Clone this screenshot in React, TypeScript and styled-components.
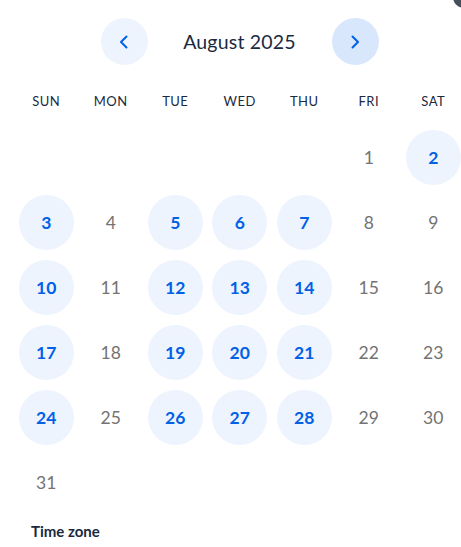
import * as React from 'react';
import styled, {createGlobalStyle} from 'styled-components';

const GlobalStyle = createGlobalStyle`
	html, body {
		margin: 0;
		padding: 0;
		background: #fff;
	}
	body {
		font-family: "Lato", "Open Sans", sans-serif;
		overflow: hidden;
	}
`;

const Page = styled.div`
	position: relative;
	width: 461px;
	height: 547px;
	overflow: hidden;
	background: #fff;
`;

const Corner = styled.div`
	position: absolute;
	top: -14px;
	right: -14px;
	width: 22px;
	height: 22px;
	border-radius: 50%;
	background: #45505c;
`;

const Calendar = styled.div`
	width: 465px;
	padding-left: 14px;
`;

const Header = styled.div`
	display: flex;
	align-items: center;
	justify-content: center;
	width: 451px;
	padding-top: 18px;
	height: 47px;
`;

const NavButton = styled.button<{strong?: boolean}>`
	width: 47px;
	height: 47px;
	border: 0;
	border-radius: 50%;
	padding: 0;
	display: flex;
	align-items: center;
	justify-content: center;
	background: ${p => p.strong ? '#d9e7fd' : '#eef4fe'};
	color: #0060e6;
	cursor: pointer;
`;

const Title = styled.div`
	width: 184px;
	text-align: center;
	font-size: 19.5px;
	color: #1a2a3f;
	letter-spacing: 0.2px;
`;

const Weekdays = styled.div`
	display: grid;
	grid-template-columns: repeat(7, 64.5px);
	margin-top: 24px;
	height: 24px;
	align-items: center;
`;

const Weekday = styled.div`
	text-align: center;
	font-size: 13px;
	color: #1a2a3f;
	letter-spacing: 0.5px;
`;

const Days = styled.div`
	display: grid;
	grid-template-columns: repeat(7, 64.5px);
	grid-auto-rows: 65px;
	margin-top: 12px;
`;

const Cell = styled.div`
	display: flex;
	align-items: center;
	justify-content: center;
`;

const Day = styled.div<{available?: boolean}>`
	width: 55px;
	height: 55px;
	border-radius: 50%;
	display: flex;
	align-items: center;
	justify-content: center;
	font-size: 17.5px;
	font-weight: ${p => p.available ? 700 : 400};
	color: ${p => p.available ? '#0060e6' : '#737373'};
	background: ${p => p.available ? '#eef4fe' : 'transparent'};
`;

const TimeZone = styled.div`
	padding-left: 31px;
	margin-top: 7px;
	font-size: 15px;
	font-weight: 700;
	color: #1a2a3f;
`;

const Chevron = ({dir}: {dir: 'left' | 'right'}) =>
	<svg width="14" height="16" viewBox="0 0 14 16" fill="none">
		<path
			d={dir === 'left' ? 'M9.5 2.5 4 8l5.5 5.5' : 'M4.5 2.5 10 8l-5.5 5.5'}
			stroke="currentColor"
			strokeWidth="2"
			strokeLinecap="round"
			strokeLinejoin="round"
		/>
	</svg>;

const weekdays = ['SUN', 'MON', 'TUE', 'WED', 'THU', 'FRI', 'SAT'];
const available = [2, 3, 5, 6, 7, 10, 12, 13, 14, 17, 19, 20, 21, 24, 26, 27, 28];
const offset = 5;

export default function App() {
	const cells: (number | null)[] = [];
	for (let i = 0; i < offset; i++) cells.push(null);
	for (let d = 1; d <= 31; d++) cells.push(d);

	return (
		<Page>
			<GlobalStyle />
			<Calendar>
				<Header>
					<NavButton aria-label="Previous month"><Chevron dir="left" /></NavButton>
					<Title>August 2025</Title>
					<NavButton strong aria-label="Next month"><Chevron dir="right" /></NavButton>
				</Header>
				<Weekdays>
					{weekdays.map(w => <Weekday key={w}>{w}</Weekday>)}
				</Weekdays>
				<Days>
					{cells.map((d, i) =>
						<Cell key={i}>
							{d !== null && <Day available={available.includes(d)}>{d}</Day>}
						</Cell>
					)}
				</Days>
			</Calendar>
			<TimeZone>Time zone</TimeZone>
			<Corner />
		</Page>
	);
}
